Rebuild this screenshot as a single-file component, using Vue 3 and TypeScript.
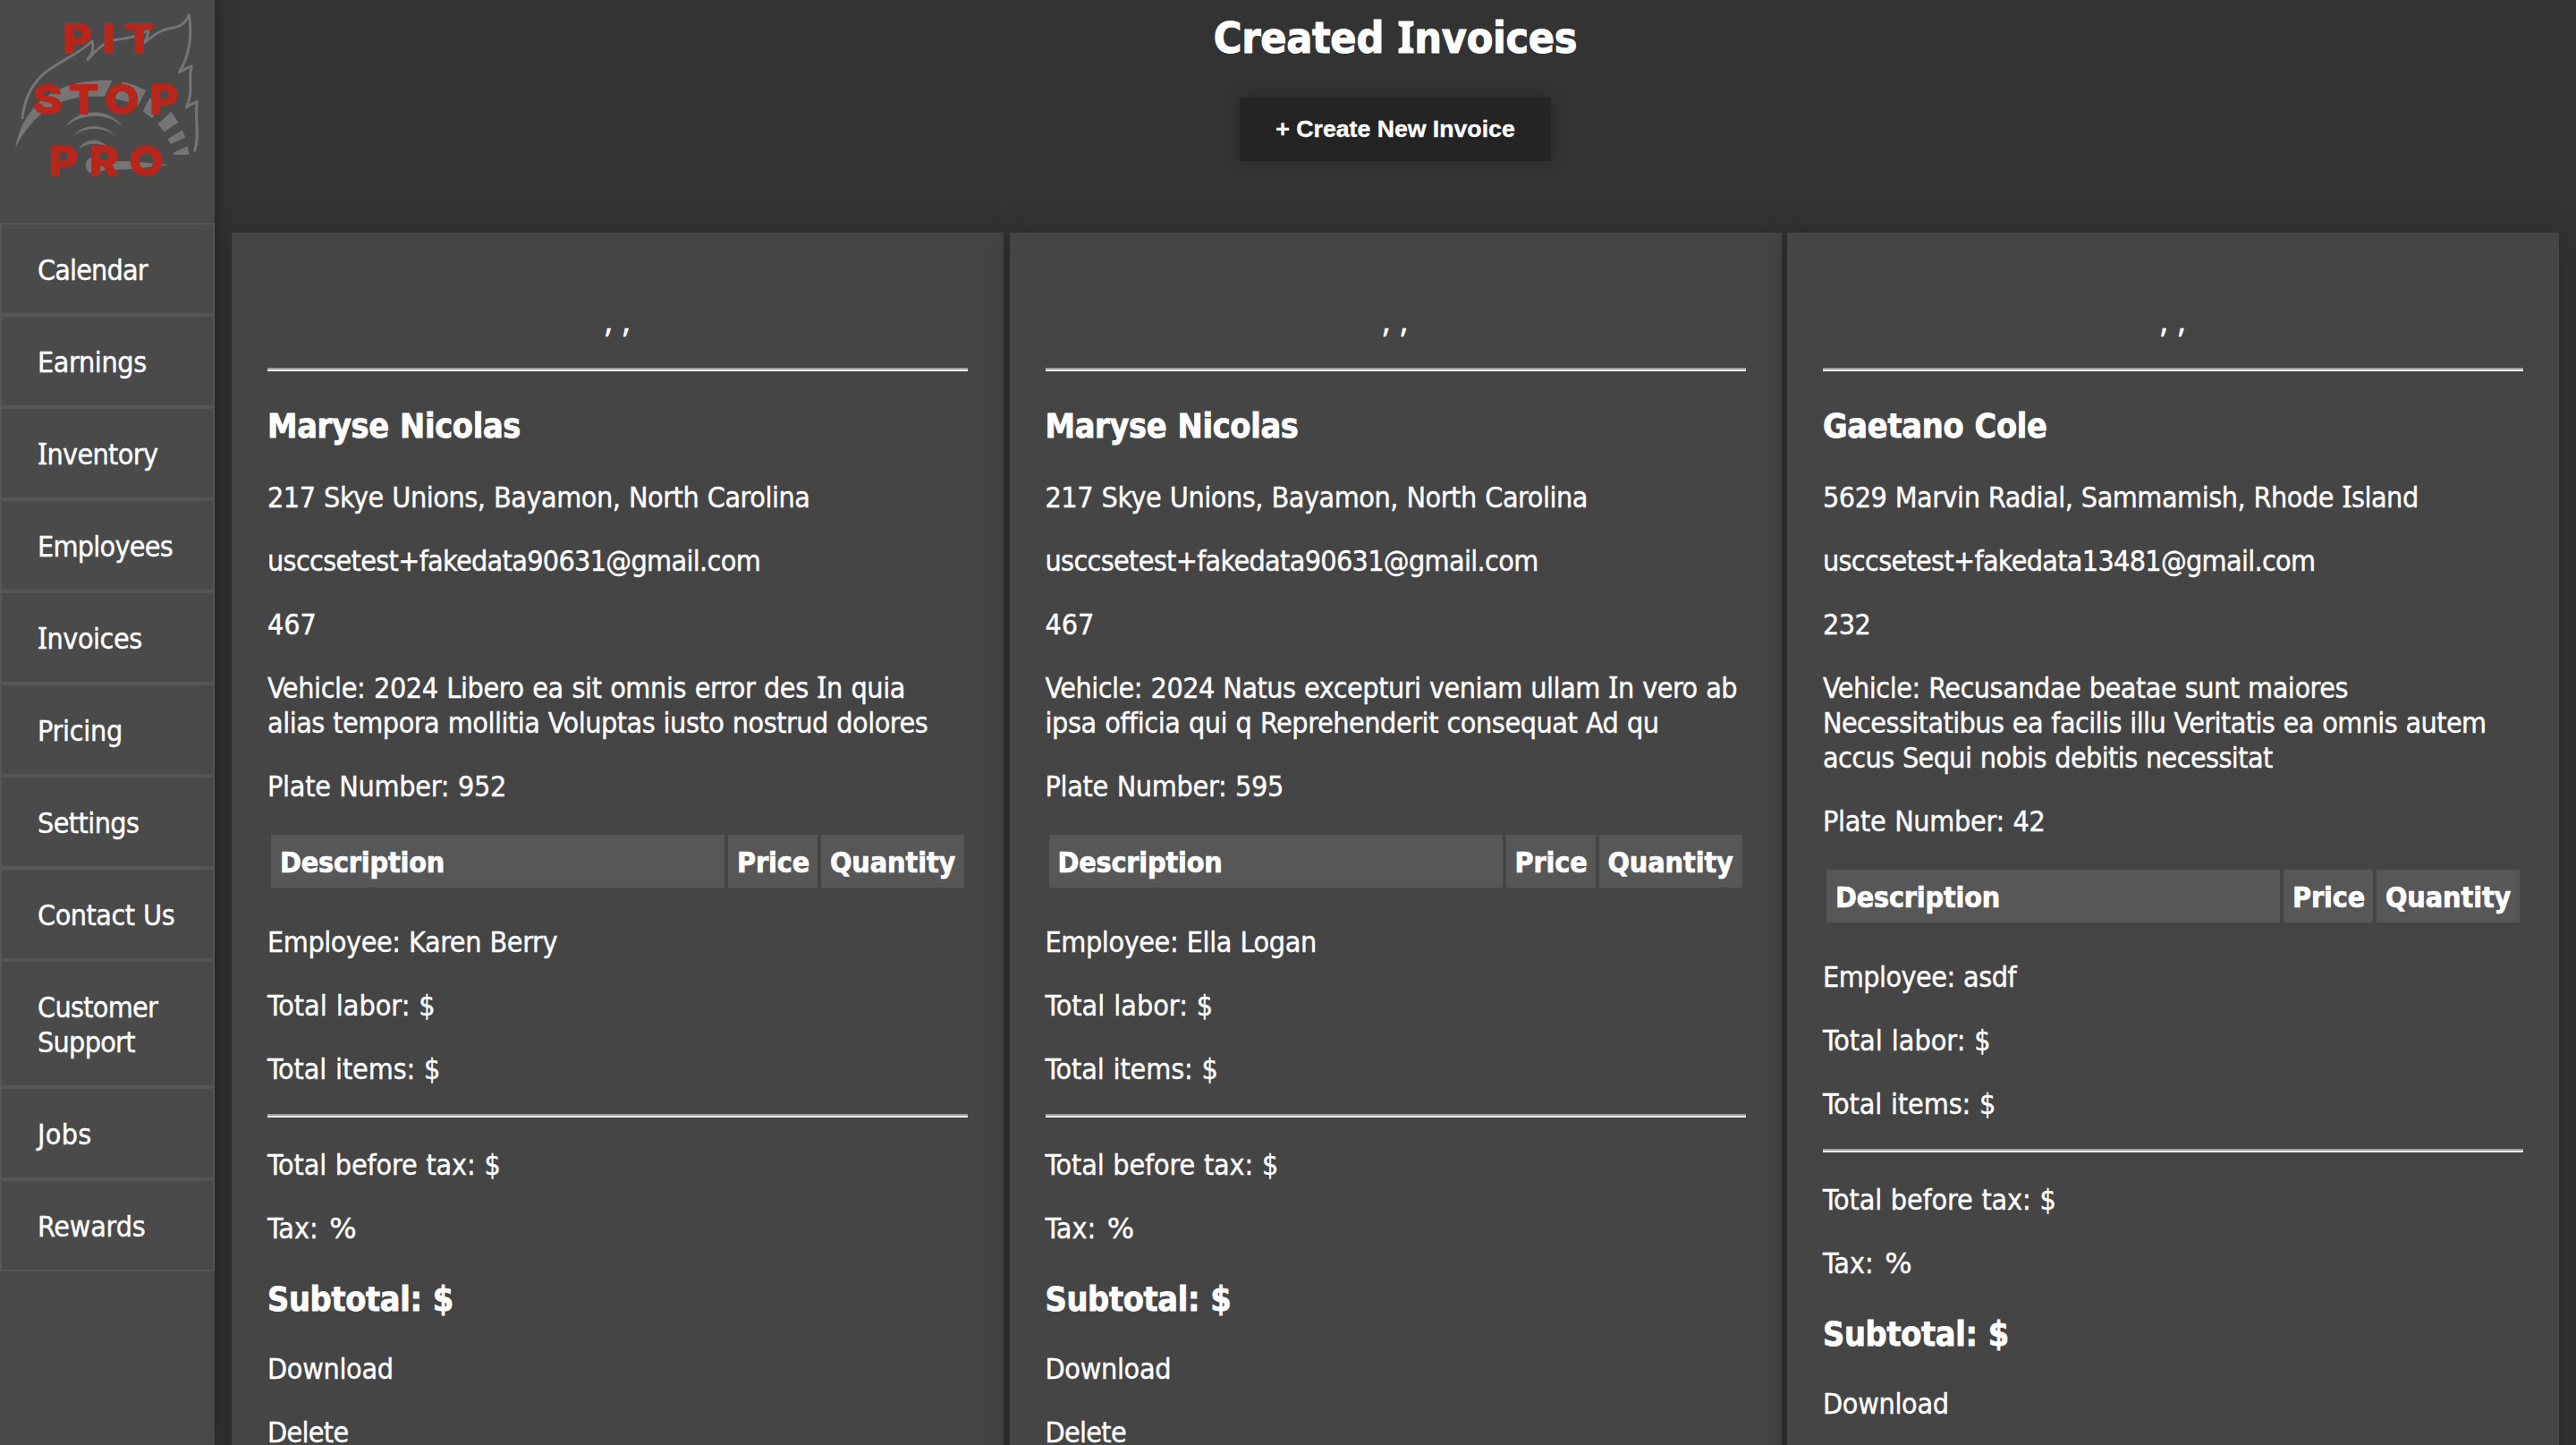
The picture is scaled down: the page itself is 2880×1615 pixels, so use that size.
<script setup lang="ts">
import { h, type FunctionalComponent } from 'vue'

interface Line { text: string; track: number }
interface Invoice {
  name: Line
  address: Line
  email: Line
  phone: Line
  vehicle: Line[]
  plate: Line
  employee: Line
}

const Run: FunctionalComponent<{ line: Line }> = (props) =>
  h(
    'span',
    { class: 'run', style: { letterSpacing: props.line.track + 'px' } },
    props.line.text
      .split(/(I)/)
      .filter((part) => part !== '')
      .map((part) => (part === 'I' ? h('span', { class: 'run-i' }, part) : part)),
  )
Run.props = ['line']

const l = (text: string, track = 0): Line => ({ text, track })

const nav: Line[] = [
  l('Calendar', -0.85),
  l('Earnings', -0.37),
  l('Inventory', -0.64),
  l('Employees', -0.74),
  l('Invoices', -0.47),
  l('Pricing', -0.3),
  l('Settings', -0.58),
  l('Contact Us', -0.48),
  l('Customer Support', -0.72),
  l('Jobs', 0.3),
  l('Rewards', -0.22),
]

const invoices: Invoice[] = [
  {
    name: l('Maryse Nicolas', -0.3),
    address: l('217 Skye Unions, Bayamon, North Carolina', -0.45),
    email: l('usccsetest+fakedata90631@gmail.com', -0.67),
    phone: l('467', -0.11),
    vehicle: [
      l('Vehicle: 2024 Libero ea sit omnis error des In quia', -0.38),
      l('alias tempora mollitia Voluptas iusto nostrud dolores', -0.49),
    ],
    plate: l('Plate Number: 952', -0.27),
    employee: l('Employee: Karen Berry', -0.42),
  },
  {
    name: l('Maryse Nicolas', -0.3),
    address: l('217 Skye Unions, Bayamon, North Carolina', -0.45),
    email: l('usccsetest+fakedata90631@gmail.com', -0.67),
    phone: l('467', -0.11),
    vehicle: [
      l('Vehicle: 2024 Natus excepturi veniam ullam In vero ab', -0.48),
      l('ipsa officia qui q Reprehenderit consequat Ad qu', -0.44),
    ],
    plate: l('Plate Number: 595', -0.3),
    employee: l('Employee: Ella Logan', -0.4),
  },
  {
    name: l('Gaetano Cole', -0.26),
    address: l('5629 Marvin Radial, Sammamish, Rhode Island', -0.49),
    email: l('usccsetest+fakedata13481@gmail.com', -0.69),
    phone: l('232', -0.6),
    vehicle: [
      l('Vehicle: Recusandae beatae sunt maiores', -0.47),
      l('Necessitatibus ea facilis illu Veritatis ea omnis autem', -0.58),
      l('accus Sequi nobis debitis necessitat', -0.6),
    ],
    plate: l('Plate Number: 42', -0.3),
    employee: l('Employee: asdf', -0.52),
  },
]
</script>

<template>
  <div class="page">
    <aside class="sidebar">
      <svg class="logo" viewBox="0 0 720 747" role="img" aria-label="Pit Stop Pro">
        <g fill="none" stroke="#757575" stroke-width="9" stroke-linecap="round" stroke-linejoin="round">
          <path
            d="M75 395C82 335 108 275 160 237C215 197 255 187 309 138C316 160 312 175 294 200C325 165 352 139 392 133C428 129 455 124 498 102C497 116 492 128 484 143C510 122 535 102 566 96C598 91 620 84 634 50C646 125 636 185 601 242C613 235 626 229 643 222C629 270 652 305 625 360C636 352 648 346 661 341C652 400 671 455 653 505"
          />
        </g>
        <g fill="#757575">
          <path d="M52 495C75 368 170 262 377 270L350 324C210 315 120 365 52 495Z" />
          <path d="M411 275C440 279 466 290 490 304L462 355C440 345 415 337 385 331Z" />
          <path d="M503 328L536 358L510 397L479 373Z" />
          <path d="M574 374L598 410L551 442L529 416Z" />
          <path d="M612 436L622 461L573 483L563 466Z" />
          <path d="M629 490L635 519L583 519L581 512Z" />
          <path d="M220 426C260 360 370 360 412 426C365 377 270 377 220 426Z" />
          <path d="M246 456C280 412 350 412 387 456C348 424 284 424 246 456Z" />
          <path d="M265 499C285 462 335 462 358 490C330 477 290 480 265 499Z" />
          <path d="M316 527C280 524 277 582 316 582L350 571L430 568L572 553L430 541L350 540Z" />
        </g>
        <g class="logo-text" transform="scale(1.07 1)">
          <text x="196.5 320.5 387.5" y="180">PIT</text>
          <text x="101.5 214 327 468.5" y="384">STOP</text>
          <text x="152.5 279.5 403.5" y="590">PRO</text>
        </g>
      </svg>
      <nav class="nav">
        <a v-for="item in nav" :key="item.text" class="nav-item"><Run :line="item" /></a>
      </nav>
    </aside>

    <main class="main">
      <h1 class="title"><Run :line="l('Created Invoices', -0.29)" /></h1>
      <button class="create">+ Create New Invoice</button>

      <section class="cards">
        <article v-for="(inv, i) in invoices" :key="i" class="card">
          <p class="company">, ,</p>
          <hr />
          <h3><Run :line="inv.name" /></h3>
          <p><Run :line="inv.address" /></p>
          <p><Run :line="inv.email" /></p>
          <p><Run :line="inv.phone" /></p>
          <p>
            <template v-for="(row, r) in inv.vehicle" :key="r"><br v-if="r > 0" /><Run :line="row" /></template>
          </p>
          <p><Run :line="inv.plate" /></p>
          <div class="items">
            <div class="cell wide"><Run :line="l('Description', -0.2)" /></div>
            <div class="cell price"><Run :line="l('Price', -0.1)" /></div>
            <div class="cell quantity"><Run :line="l('Quantity', -0.1)" /></div>
          </div>
          <p><Run :line="inv.employee" /></p>
          <p><Run :line="l('Total labor: $', 0.02)" /></p>
          <p><Run :line="l('Total items: $', -0.1)" /></p>
          <hr class="rule" />
          <p><Run :line="l('Total before tax: $', -0.13)" /></p>
          <p><Run :line="l('Tax:')" /><Run class="percent" :line="l(' %')" /></p>
          <h3 class="subtotal"><Run :line="l('Subtotal: $', -0.31)" /></h3>
          <p><Run :line="l('Download', -0.3)" /></p>
          <p><Run :line="l('Delete', -0.7)" /></p>
        </article>
      </section>
    </main>
  </div>
</template>

<style>
body {
  background: #333;
  overflow: hidden;
}
.run {
  white-space: nowrap;
}
.run-i {
  font-family: 'Noto Sans', sans-serif;
  font-size: 1.02em;
  line-height: 0;
}
</style>

<style scoped>
.page {
  display: flex;
  height: 1615px;
  overflow: hidden;
  background: #333;
  color: #fff;
  font-family: 'DejaVu Sans Condensed', 'DejaVu Sans', sans-serif;
  font-stretch: condensed;
  font-size: 32px;
  line-height: 39px;
  word-spacing: 0.8px;
  -webkit-text-stroke: 0.4px #fff;
}
.sidebar {
  flex: none;
  width: 240px;
  background: #4a4a4a;
  box-shadow: 0 0 20px rgba(0, 0, 0, 0.3);
}
.logo {
  display: block;
  width: 240px;
  height: 249px;
  -webkit-text-stroke: 0;
}
.logo-text {
  fill: #b8261b;
  font: 900 142px Inter, sans-serif;
}
.nav {
  display: flex;
  flex-direction: column;
}
.nav-item {
  padding: 32px 0 28px 40px;
  border: 2px solid #575757;
}
.nav-item :deep(.run) {
  white-space: normal;
}
.main {
  flex: 1;
  display: flex;
  flex-direction: column;
  align-items: center;
}
.title {
  flex: none;
  box-sizing: border-box;
  margin: 0;
  padding-top: 13px;
  height: 109px;
  font-size: 48px;
  line-height: 58px;
  -webkit-text-stroke-width: 1px;
}
.create {
  flex: none;
  width: 348px;
  height: 71px;
  padding: 0 0 1px;
  border: 0;
  background: #242424;
  color: #fff;
  box-shadow: 0 0 16px rgba(0, 0, 0, 0.2);
  font: bold 26.67px 'Liberation Sans', Arial, sans-serif;
}
.cards {
  flex: none;
  display: flex;
  align-items: flex-start;
  gap: 6.5px;
  width: 2602px;
  margin-top: 80px;
}
.card {
  flex: 1;
  box-sizing: border-box;
  height: 1500px;
  padding: 80px 40px 0;
  background: #454545;
  box-shadow: 0 0 32px rgba(0, 0, 0, 0.2);
}
p {
  margin: 0 0 30px;
  padding-top: 2px;
}
.company {
  margin-bottom: 32px;
  padding: 0 0 4px;
  font-family: 'Noto Sans', sans-serif;
  font-size: 36px;
  line-height: 35px;
  text-align: center;
}
.percent {
  margin-left: 1.5px;
  font-family: 'DejaVu Sans', sans-serif;
  font-stretch: normal;
}
hr {
  height: 0;
  margin: 0 0 37.4px;
  border: 2px solid;
  border-width: 2px 0;
  border-color: #9a9a9a #eee #eee #9a9a9a;
}
.rule {
  margin-bottom: 32px;
}
h3 {
  margin: 35.4px 0;
  padding-top: 2px;
  font-size: 37.44px;
  line-height: 45px;
  -webkit-text-stroke-width: 0.8px;
}
.subtotal {
  margin-bottom: 34.2px;
}
.items {
  display: flex;
  gap: 4px;
  padding: 4px;
  margin-bottom: 36px;
  font-weight: bold;
  -webkit-text-stroke-width: 0.7px;
}
.cell {
  box-sizing: border-box;
  padding: 12px 0 8px 10px;
  background: #575757;
}
.wide {
  flex: 1;
}
.price {
  width: 100px;
}
.quantity {
  width: 160px;
}
</style>
